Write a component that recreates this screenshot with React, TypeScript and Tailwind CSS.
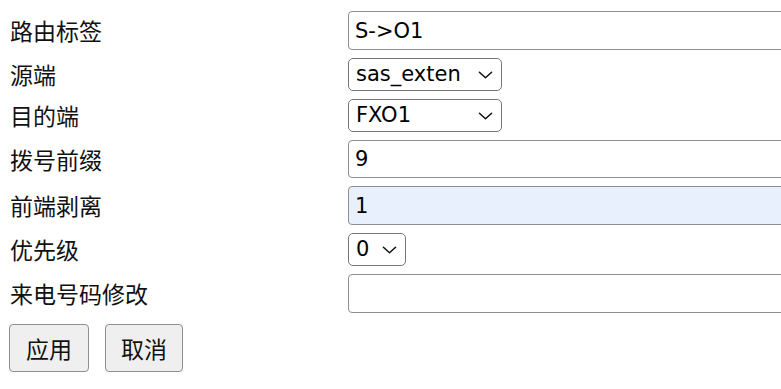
import { useState } from "react";

const labelFont = "font-['Noto_Sans_CJK_SC',sans-serif]";
const fieldFont = "font-['DejaVu_Sans','Verdana',sans-serif]";

const Chevron = () => (
    <svg viewBox="0 0 16 9" className="w-[15px] h-[9px]" fill="none" stroke="#111" strokeWidth={1.6} strokeLinecap="round" strokeLinejoin="round">
        <path d="M1.5 1.5 8 7.5l6.5-6" />
    </svg>
);

const Row = ({ label, height, children }: { label: string; height: string; children: React.ReactNode }) => (
    <div className={`flex items-center ${height}`}>
        <div className={`w-[348px] shrink-0 pl-[10px] text-[23px] leading-none text-[#111] ${labelFont}`}>{label}</div>
        {children}
    </div>
);

const Select = ({ value, options, width }: { value: string; options: string[]; width: string }) => {
    const [v, setV] = useState(value);
    return (
        <div className={`relative h-full ${width}`}>
            <select
                value={v}
                onChange={(e) => setV(e.target.value)}
                className={`appearance-none h-full w-full border border-[#767676] rounded-[5px] bg-white pl-[7px] text-[21px] text-black ${fieldFont}`}
            >
                {options.map((o) => (
                    <option key={o} value={o}>{o}</option>
                ))}
            </select>
            {/* arrow drawn over the native select */}
            <span className="pointer-events-none absolute right-[9px] top-1/2 -translate-y-1/2 flex">
                <Chevron />
            </span>
        </div>
    );
};

const Field = ({ value, filled }: { value: string; filled?: boolean }) => (
    <input
        defaultValue={value}
        className={`h-full w-[470px] shrink-0 border border-[#8f8f8f] rounded-[4px] px-[6px] text-[21px] text-black outline-none ${fieldFont} ${filled ? "bg-[#e8f0fe]" : "bg-white"}`}
    />
);

export default function App() {
    return (
        <div className="w-screen h-[389px] overflow-hidden bg-white">
            <div className="flex flex-col gap-2 pt-[11px]">
                <Row label="路由标签" height="h-[39px]">
                    <Field value="S->O1" />
                </Row>
                <Row label="源端" height="h-[33px]">
                    <Select value="sas_exten" options={["sas_exten"]} width="w-[154px]" />
                </Row>
                <Row label="目的端" height="h-[33px]">
                    <Select value="FXO1" options={["FXO1"]} width="w-[154px]" />
                </Row>
                <Row label="拨号前缀" height="h-[38px]">
                    <Field value="9" />
                </Row>
                <Row label="前端剥离" height="h-[39px]">
                    <Field value="1" filled />
                </Row>
                <Row label="优先级" height="h-[33px]">
                    <Select value="0" options={["0", "1", "2"]} width="w-[58px]" />
                </Row>
                <Row label="来电号码修改" height="h-[39px]">
                    <Field value="" />
                </Row>
            </div>
            <div className={`flex gap-4 pl-[9px] mt-[11px] text-[23px] text-[#111] ${labelFont}`}>
                <button className="w-[80px] h-[48px] border border-[#8f8f8f] rounded-[4px] bg-[#efefef]">应用</button>
                <button className="w-[78px] h-[48px] border border-[#8f8f8f] rounded-[4px] bg-[#efefef]">取消</button>
            </div>
        </div>
    );
}
